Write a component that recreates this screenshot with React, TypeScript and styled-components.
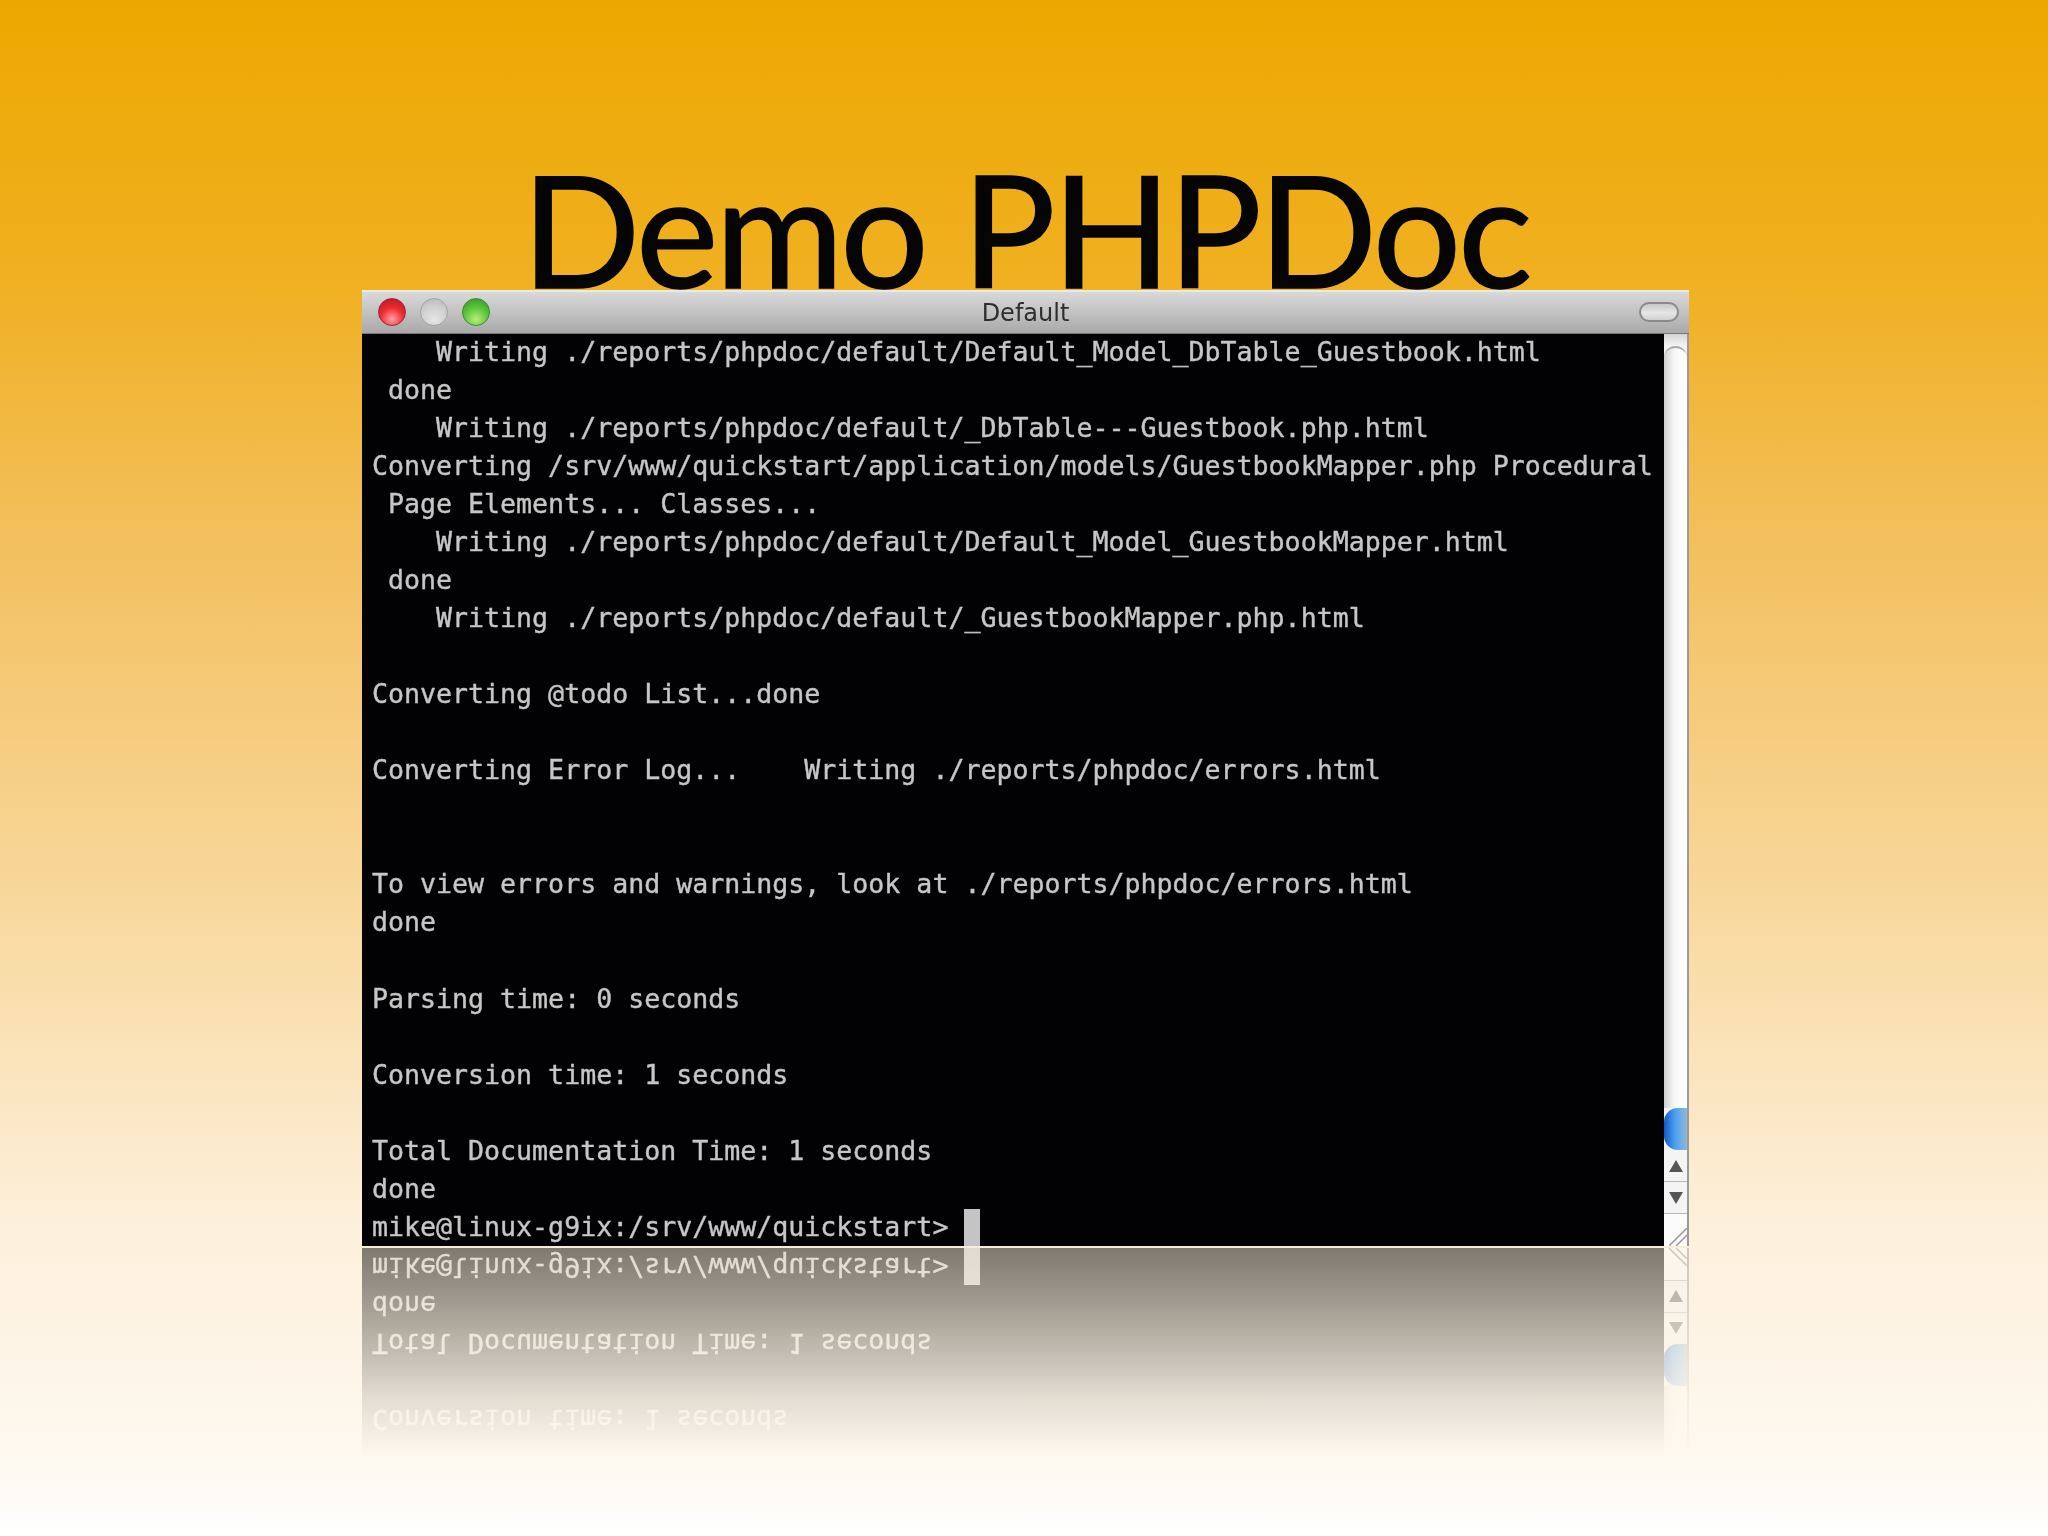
import styled, { createGlobalStyle } from 'styled-components'

const GlobalStyle = createGlobalStyle`
  html, body {
    margin: 0;
    padding: 0;
    background: #fff;
  }
`

const Slide = styled.div`
  width: 2048px;
  height: 1536px;
  overflow: hidden;
  display: flex;
  flex-direction: column;
  align-items: center;
  padding-left: 3px;
  box-sizing: border-box;
  background: linear-gradient(
    180deg,
    #eda800 0%,
    #f0b020 18%,
    #f3c060 36%,
    #f8d79a 58%,
    #fdf0dc 80%,
    #fef9f1 96%,
    #ffffff 100%
  );
`

const Title = styled.h1`
  margin: 0;
  height: 290px;
  box-sizing: border-box;
  padding-top: 148px;
  font-family: 'Lato', 'Liberation Sans', sans-serif;
  font-weight: 400;
  font-size: 156px;
  line-height: 160px;
  letter-spacing: -3.3px;
  -webkit-text-stroke: 1.5px #050505;
  color: #050505;
  white-space: nowrap;
`

const Window = styled.div`
  width: 1327px;
  flex: none;
  display: flex;
  flex-direction: column;
`

const TitleBar = styled.div`
  position: relative;
  height: 44px;
  flex: none;
  display: flex;
  align-items: center;
  justify-content: center;
  box-sizing: border-box;
  border-top: 2px solid #e9e9e6;
  border-bottom: 1px solid #77777a;
  background: linear-gradient(180deg, #d9d9d9 0%, #c4c4c4 45%, #a9a9a9 100%);
`

const Lights = styled.div`
  position: absolute;
  left: 16px;
  top: 6px;
  display: flex;
  gap: 14px;
`

const Light = styled.span<{ $tone: 'red' | 'grey' | 'green' }>`
  width: 28px;
  height: 28px;
  border-radius: 50%;
  box-sizing: border-box;
  filter: blur(0.5px);
  border: 1px solid
    ${(p) => (p.$tone === 'red' ? '#8f2a30' : p.$tone === 'green' ? '#3e8a2a' : '#a4a4a4')};
  background: ${(p) =>
    p.$tone === 'red'
      ? 'radial-gradient(circle at 50% 78%, #ff9ea0 0%, #f02a32 48%, #b5161f 100%)'
      : p.$tone === 'green'
        ? 'radial-gradient(circle at 50% 78%, #b6ee7c 0%, #58c53a 50%, #2f9322 100%)'
        : 'radial-gradient(circle at 50% 78%, #e6e6e6 0%, #cfcfcf 55%, #b4b4b4 100%)'};
`

const WindowName = styled.span`
  font-family: 'DejaVu Sans', sans-serif;
  font-size: 24px;
  color: #2e2e2e;
  filter: blur(0.5px);
`

const Pill = styled.span`
  position: absolute;
  right: 10px;
  top: 10px;
  width: 40px;
  height: 20px;
  box-sizing: border-box;
  border-radius: 10px;
  border: 2px solid #8a8a8a;
  background: linear-gradient(180deg, #c6c6c6 0%, #e6e6e6 55%, #d0d0d0 100%);
  filter: blur(0.5px);
`

const Body = styled.div`
  height: 912px;
  display: flex;
`

const Terminal = styled.div`
  flex: 1;
  min-width: 0;
  overflow: hidden;
  box-sizing: border-box;
  padding: 0 0 0 10px;
  background: #020204;
  font-family: 'DejaVu Sans Mono', 'Liberation Mono', monospace;
  font-size: 26.6px;
  color: #c6c6c6;
  -webkit-text-stroke: 0.4px #c6c6c6;
`

const Line = styled.div`
  height: 38.04px;
  line-height: 35px;
  white-space: pre;
  filter: blur(0.6px);
`

const Cursor = styled.span`
  display: inline-block;
  width: 16px;
  height: 39px;
  vertical-align: top;
  background: #c4c4c4;
`

const Scrollbar = styled.div`
  width: 25px;
  flex: none;
  display: flex;
  flex-direction: column;
  box-sizing: border-box;
  border-right: 2px solid #9a9a9a;
  background: #f2f2f2;
  filter: blur(0.7px);
`

const TrackCap = styled.div`
  height: 12px;
  flex: none;
  background: linear-gradient(180deg, #d4d4d4 0%, #f4f4f4 100%);
`

const Track = styled.div`
  flex: 1;
  border-top: 2px solid #a8a8a8;
  border-radius: 12px 12px 0 0;
  background: linear-gradient(90deg, #cfcfcf 0%, #f7f7f7 45%, #ffffff 100%);
`

const Thumb = styled.div`
  height: 42px;
  flex: none;
  border-radius: 14px 0 0 14px;
  background: linear-gradient(90deg, #1258c4 0%, #4a9cf0 45%, #6db0e8 75%, #9bb4cc 100%);
`

const ArrowCell = styled.div`
  height: 32px;
  flex: none;
  display: flex;
  align-items: center;
  justify-content: center;
  box-sizing: border-box;
  border-bottom: 1px solid #b8b8b8;
  background: #f4f4f4;
`

const Grip = styled.div`
  flex: none;
  height: 32px;
  display: flex;
  align-items: flex-end;
  justify-content: flex-end;
  background: #fbfbfb;
`

const Rule = styled.div`
  width: 1327px;
  height: 2px;
  flex: none;
  background: #f5efd8;
`

const Reflection = styled.div`
  width: 1327px;
  height: 215px;
  flex: none;
  overflow: hidden;
  -webkit-mask-image: linear-gradient(180deg, rgba(0, 0, 0, 0.5) 0%, rgba(0, 0, 0, 0.34) 30%, rgba(0, 0, 0, 0.1) 70%, rgba(0, 0, 0, 0) 97%);
  mask-image: linear-gradient(180deg, rgba(0, 0, 0, 0.5) 0%, rgba(0, 0, 0, 0.34) 30%, rgba(0, 0, 0, 0.1) 70%, rgba(0, 0, 0, 0) 97%);
`

const Flipped = styled.div`
  transform: scaleY(-1);
`

const lines = [
  '    Writing ./reports/phpdoc/default/Default_Model_DbTable_Guestbook.html',
  ' done',
  '    Writing ./reports/phpdoc/default/_DbTable---Guestbook.php.html',
  'Converting /srv/www/quickstart/application/models/GuestbookMapper.php Procedural',
  ' Page Elements... Classes...',
  '    Writing ./reports/phpdoc/default/Default_Model_GuestbookMapper.html',
  ' done',
  '    Writing ./reports/phpdoc/default/_GuestbookMapper.php.html',
  '',
  'Converting @todo List...done',
  '',
  'Converting Error Log...    Writing ./reports/phpdoc/errors.html',
  '',
  '',
  'To view errors and warnings, look at ./reports/phpdoc/errors.html',
  'done',
  '',
  'Parsing time: 0 seconds',
  '',
  'Conversion time: 1 seconds',
  '',
  'Total Documentation Time: 1 seconds',
  'done',
]

function TerminalBody() {
  return (
    <Body>
      <Terminal>
        {lines.map((text, i) => (
          <Line key={i}>{text}</Line>
        ))}
        <Line>
          {'mike@linux-g9ix:/srv/www/quickstart> '}
          <Cursor />
        </Line>
      </Terminal>
      <Scrollbar>
        <TrackCap />
        <Track />
        <Thumb />
        <ArrowCell>
          <svg width="14" height="12" viewBox="0 0 14 12">
            <path d="M7 0 L14 12 L0 12 Z" fill="#555" />
          </svg>
        </ArrowCell>
        <ArrowCell>
          <svg width="14" height="12" viewBox="0 0 14 12">
            <path d="M0 0 L14 0 L7 12 Z" fill="#555" />
          </svg>
        </ArrowCell>
        <Grip>
          <svg width="18" height="18" viewBox="0 0 18 18">
            <path d="M0 18 L18 0 M7 18 L18 7" stroke="#a2a2a2" strokeWidth="1.6" fill="none" />
          </svg>
        </Grip>
      </Scrollbar>
    </Body>
  )
}

export default function App() {
  return (
    <Slide>
      <GlobalStyle />
      <Title>Demo PHPDoc</Title>
      <Window>
        <TitleBar>
          <Lights>
            <Light $tone="red" />
            <Light $tone="grey" />
            <Light $tone="green" />
          </Lights>
          <WindowName>Default</WindowName>
          <Pill />
        </TitleBar>
        <TerminalBody />
      </Window>
      <Rule />
      <Reflection aria-hidden="true">
        <Flipped>
          <TerminalBody />
        </Flipped>
      </Reflection>
    </Slide>
  )
}
